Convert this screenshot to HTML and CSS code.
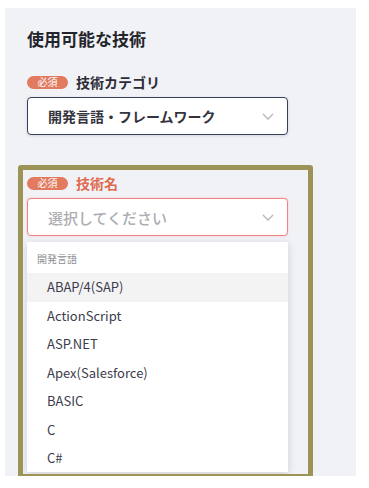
FILE: index.html
```html
<!DOCTYPE html>
<html lang="ja">
<head>
    <meta charset="UTF-8">
    <meta name="viewport" content="width=device-width, initial-scale=1.0">
    <title>使用可能な技術</title>
    <link rel="stylesheet" href="styles.css">
</head>
<body>
    <div class="panel">
        <h2 class="panel_title">使用可能な技術</h2>

        <div class="field">
            <div class="field_label">
                <span class="badge">必須</span>
                <span class="label_text">技術カテゴリ</span>
            </div>
            <div class="select select_filled">
                <span class="select_value">開発言語・フレームワーク</span>
                <svg class="chevron" width="12" height="7" viewBox="0 0 12 7"><path d="M1 1l5 5 5-5" fill="none" stroke="#b4b6bd" stroke-width="1.3"/></svg>
            </div>
        </div>

        <div class="field field_tech">
            <div class="field_label">
                <span class="badge">必須</span>
                <span class="label_text label_error">技術名</span>
            </div>
            <div class="select select_error">
                <span class="select_placeholder">選択してください</span>
                <svg class="chevron" width="12" height="7" viewBox="0 0 12 7"><path d="M1 1l5 5 5-5" fill="none" stroke="#b4b6bd" stroke-width="1.3"/></svg>
            </div>
            <div class="dropdown">
                <div class="group_head">開発言語</div>
                <ul>
                    <li class="active">ABAP/4(SAP)</li>
                    <li>ActionScript</li>
                    <li>ASP.NET</li>
                    <li>Apex(Salesforce)</li>
                    <li>BASIC</li>
                    <li>C</li>
                    <li>C#</li>
                </ul>
            </div>
        </div>

        <div class="highlight"></div>
    </div>
</body>
</html>
```

FILE: styles.css
```css
*{margin:0; padding:0; box-sizing:border-box;}
ul,li{list-style:none;}

body{
    background:#fff;
    font-family:"Noto Sans CJK JP","Noto Sans",sans-serif;
    color:#2a2a33;
}

.panel{
    position:relative;
    margin:8px 0 0 5px;
    width:351px;
    height:468px;
    background:#f1f2f6;
    padding:19px 0 0 22px;
}
.panel_title{
    font-size:17px;
    line-height:24px;
    font-weight:700;
    color:#24242c;
    margin-bottom:21px;
}

.field{width:261px;}
.field_tech{margin-top:38px;}
.field_label{
    display:flex;
    align-items:center;
    height:20px;
    margin-bottom:5px;
}
.badge{
    display:inline-flex;
    align-items:center;
    justify-content:center;
    width:41px;
    height:13px;
    border-radius:7px;
    background:#e27a60;
    color:#fff;
    font-size:10px;
    line-height:1;
}
.label_text{
    margin-left:8px;
    font-size:14px;
    font-weight:700;
    color:#2c2c36;
}
.label_error{color:#e06a4e;}

.select{
    display:flex;
    align-items:center;
    justify-content:space-between;
    height:38px;
    padding:0 13px 0 20px;
    background:#fff;
    border-radius:4px;
}
.select_filled{
    border:1px solid #34405c;
    box-shadow:0 1px 3px rgba(40,50,80,0.15);
}
.select_error{
    border:1px solid #f38383;
    box-shadow:0 0 2px rgba(240,100,100,0.35);
    margin-top:1px;
}
.select_value{
    font-size:14px;
    font-weight:700;
    color:#34343e;
}
.select_placeholder{
    font-size:15px;
    font-weight:500;
    color:#adadb2;
}
.chevron{margin-top:1px;}

.dropdown{
    margin-top:6px;
    height:230px;
    overflow:hidden;
    background:#fff;
    box-shadow:0 2px 8px rgba(30,30,50,0.16);
}
.group_head{
    height:31px;
    padding:9px 0 0 10px;
    font-size:10px;
    color:#8d8d93;
}
.dropdown li{
    height:28.5px;
    line-height:28.5px;
    padding-left:20px;
    font-size:13px;
    color:#3c3c4c;
}
.dropdown li.active{background:#f3f3f4;}

.highlight{
    position:absolute;
    left:13px;
    top:157px;
    width:295px;
    height:314px;
    border:5px solid #9c9456;
    border-radius:3px;
}
```
